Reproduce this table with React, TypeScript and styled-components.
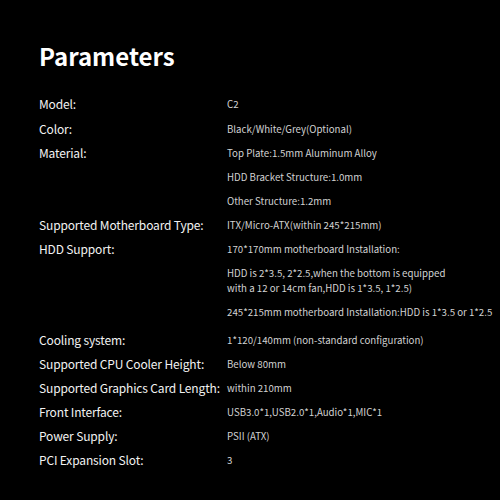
import React from "react";
import styled, { createGlobalStyle } from "styled-components";

const GlobalStyle = createGlobalStyle`
  html, body {
    margin: 0;
    padding: 0;
    background: #000;
  }
  body {
    font-family: "Noto Sans CJK SC", "Noto Sans", sans-serif;
  }
`;

const Page = styled.div`
  width: 500px;
  height: 500px;
  background: #000;
  padding: 38px 0 0 39px;
  box-sizing: border-box;
`;

const Title = styled.h1`
  margin: 0 0 18px;
  font-size: 24px;
  font-weight: 700;
  color: #fff;
  line-height: 36px;
`;

const Table = styled.div`
  display: flex;
  flex-direction: column;
`;

const Row = styled.div<{ $gapAfter?: number }>`
  display: grid;
  grid-template-columns: 188px 1fr;
  margin-bottom: ${(p) => p.$gapAfter ?? 0}px;
`;

const Label = styled.div`
  font-size: 12px;
  line-height: 24px;
  letter-spacing: -0.15px;
  color: #f2f2f2;
  white-space: nowrap;
`;

const Values = styled.div`
  display: flex;
  flex-direction: column;
`;

const Value = styled.div`
  font-size: 9.7px;
  line-height: 15px;
  padding: 5px 0 4px;
  color: #d2d2d2;
  white-space: pre;
`;

type Spec = { label: string; values: string[]; gapAfter?: number };

const specs: Spec[] = [
  { label: "Model:", values: ["C2"], gapAfter: 1 },
  { label: "Color:", values: ["Black/White/Grey(Optional)"] },
  {
    label: "Material:",
    values: [
      "Top Plate:1.5mm Aluminum Alloy",
      "HDD Bracket Structure:1.0mm",
      "Other Structure:1.2mm",
    ],
  },
  { label: "Supported Motherboard Type:", values: ["ITX/Micro-ATX(within 245*215mm)"] },
  {
    label: "HDD Support:",
    values: [
      "170*170mm motherboard Installation:",
      "HDD is 2*3.5, 2*2.5,when the bottom is equipped\nwith a 12 or 14cm fan,HDD is 1*3.5, 1*2.5)",
      "245*215mm motherboard Installation:HDD is 1*3.5 or 1*2.5",
    ],
    gapAfter: 4,
  },
  { label: "Cooling system:", values: ["1*120/140mm (non-standard configuration)"] },
  { label: "Supported CPU Cooler Height:", values: ["Below 80mm"] },
  { label: "Supported Graphics Card Length:", values: ["within 210mm"] },
  { label: "Front Interface:", values: ["USB3.0*1,USB2.0*1,Audio*1,MIC*1"] },
  { label: "Power Supply:", values: ["PSII (ATX)"] },
  { label: "PCI Expansion Slot:", values: ["3"] },
];

const App = () => {
  return (
    <Page>
      <GlobalStyle />
      <Title>Parameters</Title>
      <Table>
        {specs.map((s) => (
          <Row key={s.label} $gapAfter={s.gapAfter}>
            <Label>{s.label}</Label>
            <Values>
              {s.values.map((v) => (
                <Value key={v}>{v}</Value>
              ))}
            </Values>
          </Row>
        ))}
      </Table>
    </Page>
  );
};

export default App;
